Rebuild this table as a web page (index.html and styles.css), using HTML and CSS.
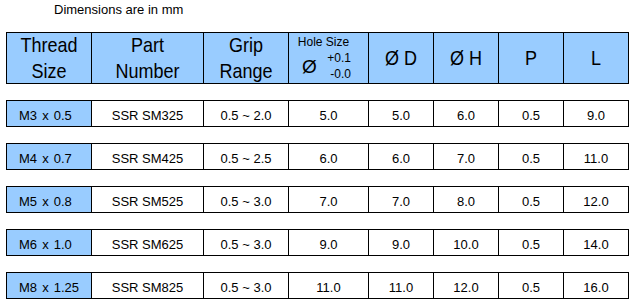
FILE: index.html
```html
<!DOCTYPE html>
<html>
<head>
<meta charset="utf-8">
<link rel="stylesheet" href="styles.css">
</head>
<body>
<div class="page">
  <div class="note">Dimensions are in mm</div>
  <div class="table">
    <div class="row head">
      <div class="cell two"><span class="hd">Thread<br>Size</span></div>
      <div class="cell two"><span class="hd">Part<br>Number</span></div>
      <div class="cell two"><span class="hd">Grip<br>Range</span></div>
      <div class="cell hole">
        <div class="hole-title">Hole Size</div>
        <div class="hole-body">
          <span class="dia">Ø</span>
          <span class="tol"><span>+0.1</span><span>-0.0</span></span>
        </div>
      </div>
      <div class="cell"><span class="hd">Ø D</span></div>
      <div class="cell"><span class="hd">Ø H</span></div>
      <div class="cell"><span class="hd">P</span></div>
      <div class="cell"><span class="hd">L</span></div>
    </div>
    <div class="row body">
      <div class="cell first">M3 x 0.5</div>
      <div class="cell">SSR SM325</div>
      <div class="cell">0.5 ~ 2.0</div>
      <div class="cell">5.0</div>
      <div class="cell">5.0</div>
      <div class="cell">6.0</div>
      <div class="cell">0.5</div>
      <div class="cell">9.0</div>
    </div>
    <div class="row body">
      <div class="cell first">M4 x 0.7</div>
      <div class="cell">SSR SM425</div>
      <div class="cell">0.5 ~ 2.5</div>
      <div class="cell">6.0</div>
      <div class="cell">6.0</div>
      <div class="cell">7.0</div>
      <div class="cell">0.5</div>
      <div class="cell">11.0</div>
    </div>
    <div class="row body">
      <div class="cell first">M5 x 0.8</div>
      <div class="cell">SSR SM525</div>
      <div class="cell">0.5 ~ 3.0</div>
      <div class="cell">7.0</div>
      <div class="cell">7.0</div>
      <div class="cell">8.0</div>
      <div class="cell">0.5</div>
      <div class="cell">12.0</div>
    </div>
    <div class="row body">
      <div class="cell first">M6 x 1.0</div>
      <div class="cell">SSR SM625</div>
      <div class="cell">0.5 ~ 3.0</div>
      <div class="cell">9.0</div>
      <div class="cell">9.0</div>
      <div class="cell">10.0</div>
      <div class="cell">0.5</div>
      <div class="cell">14.0</div>
    </div>
    <div class="row body">
      <div class="cell first">M8 x 1.25</div>
      <div class="cell">SSR SM825</div>
      <div class="cell">0.5 ~ 3.0</div>
      <div class="cell">11.0</div>
      <div class="cell">11.0</div>
      <div class="cell">12.0</div>
      <div class="cell">0.5</div>
      <div class="cell">16.0</div>
    </div>
  </div>
</div>
</body>
</html>
```
FILE: styles.css
```css
html, body {
  margin: 0;
  padding: 0;
  background: #ffffff;
}
.page {
  font-family: "Liberation Sans", Arial, sans-serif;
  color: #000;
  padding: 0 0 0 6px;
}
.note {
  font-size: 13px;
  line-height: 15px;
  padding: 2px 0 0 48px;
  height: 32px;
  box-sizing: border-box;
}
.table {
  display: flex;
  flex-direction: column;
  gap: 16px;
  width: 623px;
}
.row {
  display: grid;
  grid-template-columns: 84px 112px 85px 80px 65px 65px 65px 65px;
  border: 1px solid #000;
}
.cell {
  border-left: 1px solid #000;
  display: flex;
  align-items: center;
  justify-content: center;
  text-align: center;
  white-space: nowrap;
}
.cell:first-child {
  border-left: none;
}
.head {
  height: 52px;
  box-sizing: border-box;
  background: #99ccff;
  font-size: 18px;
  line-height: 23px;
}
.hd {
  display: inline-block;
  transform: scaleY(1.1);
}
.head .cell.two {
  padding-top: 1px;
}
.hole {
  flex-direction: column;
  align-items: stretch;
  justify-content: flex-start;
  font-size: 12px;
  line-height: 14px;
}
.hole-title {
  padding: 2px 10px 0 0;
  text-align: center;
}
.hole-body {
  display: flex;
  align-items: center;
  justify-content: space-between;
  padding: 1px 17px 0 13px;
}
.dia {
  font-size: 19px;
  line-height: 22px;
  padding-top: 1px;
}
.tol {
  display: flex;
  flex-direction: column;
  align-items: flex-end;
  line-height: 16px;
}
.body {
  height: 27px;
  box-sizing: border-box;
  background: #fff;
  font-size: 13px;
  line-height: 15px;
}
.body .cell {
  padding-top: 3px;
}
.body .cell.first {
  background: #99ccff;
  justify-content: flex-start;
  padding-left: 12px;
  word-spacing: 1.5px;
}
```
